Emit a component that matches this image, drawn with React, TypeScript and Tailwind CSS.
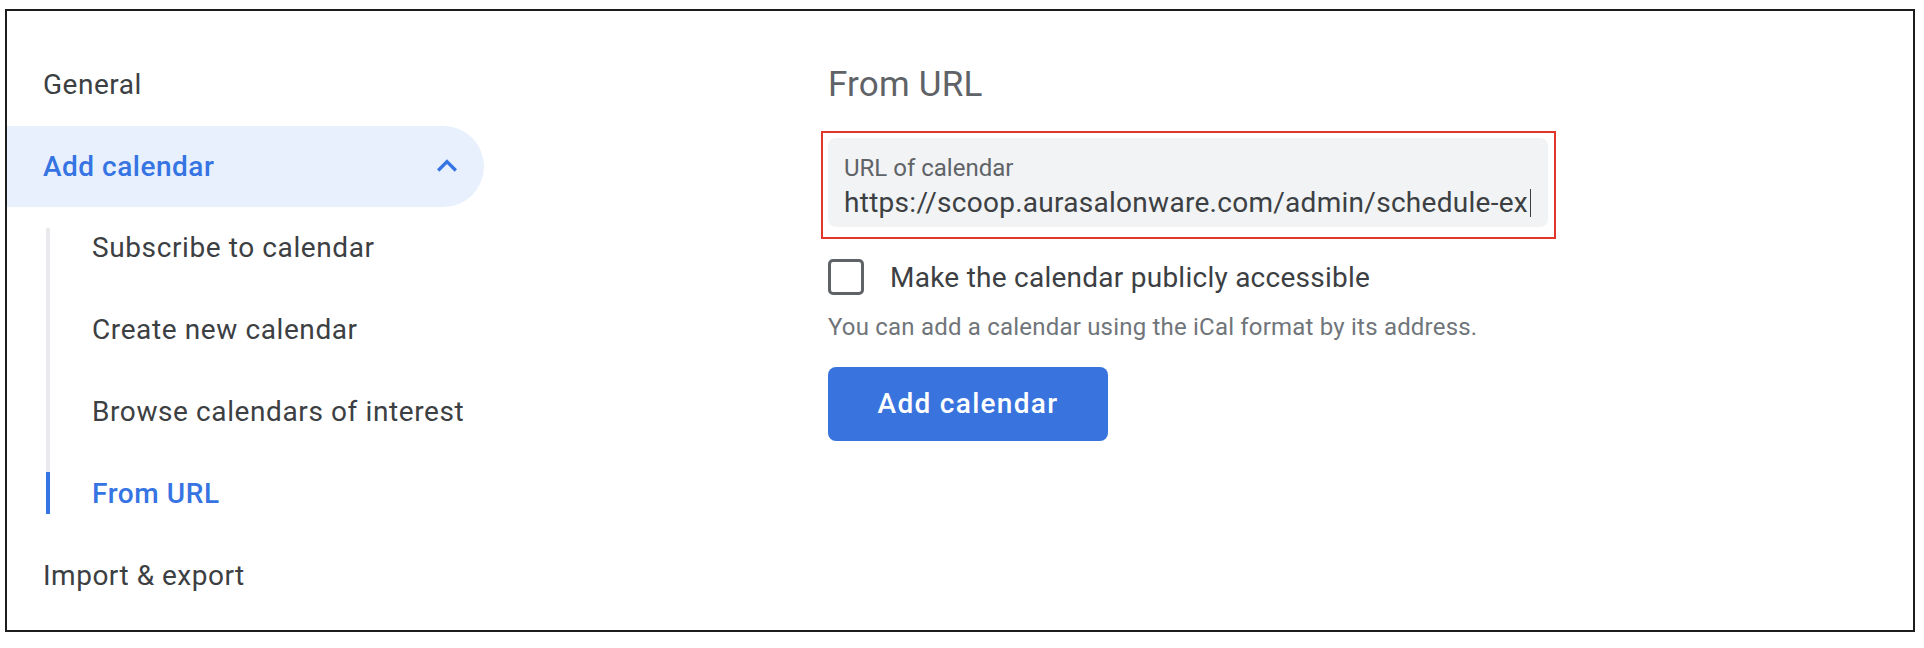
import React from "react";

const font = { fontFamily: "Roboto, 'Noto Sans', Arial, sans-serif" };

function SubItem({
  label,
  first,
  active,
}: {
  label: string;
  first?: boolean;
  active?: boolean;
}) {
  return (
    <div className="flex h-[81.75px]">
      <div className="flex w-[4px] flex-col">
        {first && <div className="h-[20.5px]" />}
        {active ? (
          <>
            <div className="h-[20px] bg-[#e8eaed]" />
            <div className="h-[42px] bg-[#3574e2]" />
            <div className="flex-1" />
          </>
        ) : (
          <div className="flex-1 bg-[#e8eaed]" />
        )}
      </div>
      <div
        className={
          "ml-[42px] flex items-center text-[28px] leading-[33px] tracking-[0.6px] " +
          (active ? "font-medium text-[#3574e2]" : "text-[#3c4043]")
        }
      >
        {label}
      </div>
    </div>
  );
}

export default function App() {
  return (
    <div className="bg-white pl-[5px] pt-[9px]" style={font}>
      <div className="flex h-[623px] w-[1910px] border-2 border-[#1d1d1d] bg-white">
        {/* Sidebar */}
        <div className="flex w-[477px] shrink-0 flex-col pt-[33px]">
          <div className="flex h-[81.5px] items-center pl-[36px] text-[28px] leading-[33px] tracking-[0.5px] text-[#3c4043]">
            General
          </div>
          <div className="flex h-[81.5px] items-center justify-between rounded-r-full bg-[#e8f0fe] pl-[36px] pr-[17px]">
            <span className="text-[28px] font-medium leading-[33px] tracking-[0.5px] text-[#3574e2]">
              Add calendar
            </span>
            <svg width="40" height="40" viewBox="0 0 24 24" fill="#3574e2">
              <path d="M12 8l-6 6 1.41 1.41L12 10.83l4.59 4.58L18 14z" />
            </svg>
          </div>
          <div className="ml-[39px] flex flex-col">
            <SubItem label="Subscribe to calendar" first />
            <SubItem label="Create new calendar" />
            <SubItem label="Browse calendars of interest" />
            <SubItem label="From URL" active />
          </div>
          <div className="flex h-[82px] items-center pl-[36px] text-[28px] leading-[33px] tracking-[0.5px] text-[#3c4043]">
            Import &amp; export
          </div>
        </div>

        {/* Main */}
        <div className="ml-[344px] flex flex-col pt-[54px]">
          <h1 className="text-[35px] leading-[40px] tracking-[0.2px] text-[#5f6368]">From URL</h1>
          <div className="-ml-[7px] mt-[26px] w-[735px] border-2 border-[#e0362c] pb-[10px] pl-[5px] pr-[6px] pt-[5px]">
            <div className="h-[89px] rounded-[8px] bg-[#f1f3f4] pl-[16px] pt-[16px]">
              <div className="text-[24px] leading-[28px] text-[#5f6368]">
                URL of calendar
              </div>
              <div className="mt-[4px] flex items-center text-[28px] leading-[33px] text-[#3c4043]">
                <span className="tracking-[0.28px]">https://scoop.aurasalonware.com/admin/schedule-ex</span>
                <span className="ml-[2px] h-[28px] w-[1px] bg-[#3c4043]" />
              </div>
            </div>
          </div>
          <div className="mt-[20px] flex items-center">
            <div className="h-[36px] w-[36px] rounded-[5px] border-[3.5px] border-[#5f6368]" />
            <span className="ml-[26px] text-[28px] leading-[33px] tracking-[0.25px] text-[#3c4043]">
              Make the calendar publicly accessible
            </span>
          </div>
          <div className="mt-[18px] text-[24px] leading-[28px] tracking-[0.2px] text-[#70757a]">
            You can add a calendar using the iCal format by its address.
          </div>
          <button className="mt-[26px] flex h-[74px] w-[280px] items-center justify-center rounded-[8px] bg-[#3873de] text-[28px] font-medium tracking-[1.3px] text-white">
            Add calendar
          </button>
        </div>
      </div>
    </div>
  );
}
